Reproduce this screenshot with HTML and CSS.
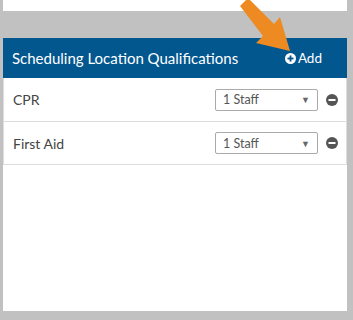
FILE: index.html
```html
<!DOCTYPE html>
<html lang="en">
<head>
  <meta charset="UTF-8">
  <title>Scheduling Location Qualifications</title>
  <link rel="stylesheet" href="styles.css">
</head>
<body>
  <div class="top-card"></div>

  <section class="panel">
    <header class="panel-header">
      <h2>Scheduling Location Qualifications</h2>
      <a class="add-link" href="#">
        <svg width="11" height="11" viewBox="0 0 12 12"><circle cx="6" cy="6" r="6" fill="#fff"/><rect x="2.7" y="5" width="6.6" height="2" fill="#03578f"/><rect x="5" y="2.7" width="2" height="6.6" fill="#03578f"/></svg>
        Add
      </a>
    </header>
    <div class="qual-list">
      <div class="qual-row">
        <span class="qual-name">CPR</span>
        <div class="staff-select">1 Staff<span class="caret">&#9660;</span></div>
        <svg class="remove" width="12" height="12" viewBox="0 0 12 12"><circle cx="6" cy="6" r="6" fill="#555"/><rect x="2.5" y="5" width="7" height="2" fill="#fff"/></svg>
      </div>
      <div class="qual-row">
        <span class="qual-name">First Aid</span>
        <div class="staff-select">1 Staff<span class="caret">&#9660;</span></div>
        <svg class="remove" width="12" height="12" viewBox="0 0 12 12"><circle cx="6" cy="6" r="6" fill="#555"/><rect x="2.5" y="5" width="7" height="2" fill="#fff"/></svg>
      </div>
    </div>
  </section>

  <!-- callout arrow pointing at the Add link -->
  <svg class="callout" width="353" height="320" viewBox="0 0 353 320">
    <polygon points="240,6 248,-2 274,24 280,17 290,51 256,43 263,36" fill="#ee8a22"/>
  </svg>
</body>
</html>
```

FILE: styles.css
```css
body {
  margin: 0;
  padding: 0 6px 0 3px;
  height: 320px;
  background-color: #c1c1c1;
  font-family: Lato, "Open Sans", sans-serif;
  position: relative;
  overflow: hidden;
}
.top-card {
  height: 11px;
  background-color: #fff;
}
.panel {
  margin-top: 27px;
  height: 273px;
  background-color: #fff;
}
.panel-header {
  height: 40px;
  background-color: #03578f;
  color: #fff;
  display: flex;
  align-items: center;
  justify-content: space-between;
  padding: 0 25px 0 9px;
}
.panel-header h2 {
  margin: 0;
  font-size: 15px;
  font-weight: normal;
}
.add-link {
  color: #fff;
  text-decoration: none;
  font-size: 13.5px;
  display: flex;
  align-items: center;
  gap: 2px;
}
.qual-list {
  border-left: 1px solid #ddd;
  border-right: 1px solid #ddd;
}
.qual-row {
  height: 42px;
  border-bottom: 1px solid #ddd;
  display: flex;
  align-items: center;
  padding: 0 8px 0 9px;
}
.qual-row:first-child {
  height: 43px;
}
.qual-name {
  flex: 1;
  font-size: 14px;
  color: #444;
}
.staff-select {
  box-sizing: border-box;
  width: 103px;
  height: 22px;
  border: 1px solid #aaa;
  border-radius: 2px;
  padding: 0 7px 0 7px;
  display: flex;
  align-items: center;
  justify-content: space-between;
  font-size: 12.5px;
  color: #555;
}
.caret {
  font-size: 9px;
  color: #666;
}
.remove {
  margin-left: 8px;
}
.callout {
  position: absolute;
  left: 0;
  top: 0;
}
```
